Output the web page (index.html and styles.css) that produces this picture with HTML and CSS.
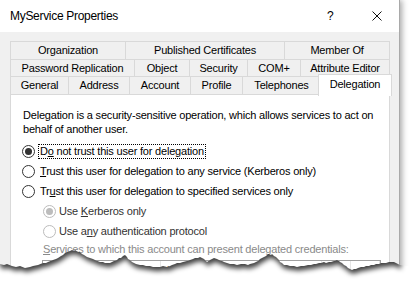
FILE: index.html
```html
<!DOCTYPE html>
<html>
<head>
<meta charset="utf-8">
<title>MyService Properties</title>
<link rel="stylesheet" href="styles.css">
</head>
<body>
<div class="stage">
  <div class="window">
    <div class="titlebar">
      <span class="title">MyService Properties</span>
      <div class="controls">
        <span class="help">?</span>
        <svg class="close" width="10" height="10" viewBox="0 0 10 10"><path d="M0.5 0.5 L9.5 9.5 M9.5 0.5 L0.5 9.5" stroke="#111" stroke-width="1" fill="none"/></svg>
      </div>
    </div>
    <div class="body">
      <div class="tabs">
        <div class="tabrow r1">
          <div class="tab w116">Organization</div>
          <div class="tab w160">Published Certificates</div>
          <div class="tab w106">Member Of</div>
        </div>
        <div class="tabrow r2">
          <div class="tab w125">Password Replication</div>
          <div class="tab w56">Object</div>
          <div class="tab w59">Security</div>
          <div class="tab w54">COM+</div>
          <div class="tab w90">Attribute Editor</div>
        </div>
        <div class="tabrow r3">
          <div class="tab w59">General</div>
          <div class="tab w62">Address</div>
          <div class="tab w62">Account</div>
          <div class="tab w53">Profile</div>
          <div class="tab w79">Telephones</div>
          <div class="tab selected">Delegation</div>
        </div>
      </div>
      <div class="panel">
        <p class="desc">Delegation is a security-sensitive operation, which allows services to act on<br>behalf of another user.</p>
        <div class="opt first"><span class="radio on"></span><span class="lbl focus">D<u>o</u> not trust this user for delegation</span></div>
        <div class="opt"><span class="radio"></span><span class="lbl"><u>T</u>rust this user for delegation to any service (Kerberos only)</span></div>
        <div class="opt"><span class="radio"></span><span class="lbl">Tr<u>u</u>st this user for delegation to specified services only</span></div>
        <div class="opt sub"><span class="radio dis on"></span><span class="lbl">Use <u>K</u>erberos only</span></div>
        <div class="opt sub"><span class="radio dis"></span><span class="lbl">Use a<u>n</u>y authentication protocol</span></div>
        <div class="note"><u>S</u>ervices to which this account can present delegated credentials:</div>
        <div class="list">
          <div class="lhead">
            <span class="c1">Service Type</span>
            <span class="c2">User or Computer</span>
            <span class="c3">Port</span>
            <span class="c4"></span>
          </div>
        </div>
      </div>
    </div>
  </div>
  <svg class="tear" width="409" height="51" viewBox="0 240 409 51">
    <defs>
      <clipPath id="below">
        <path d="M0,264 L4,265 L7,264 L12,266 L16,267 L20,266 L25,268 L30,267 L33,266 L38,265 L43,263 L46,263 L48,262 L53,260 L56,259 L58,258 L61,256 L63,255 L65,253 L67,252 L70,251 L72,250 L74,251 L75,250 L78,252 L80,252 L82,254 L84,255 L87,257 L90,258 L93,259 L95,260 L100,262 L103,262 L105,263 L110,263 L112,262 L114,261 L117,260 L119,258 L121,258 L123,256 L125,255 L127,257 L128,259 L130,260 L132,262 L136,264 L140,265 L143,265 L146,266 L150,266 L153,267 L160,267 L163,266 L167,267 L170,266 L172,265 L175,264 L177,263 L180,263 L183,262 L187,261 L190,260 L193,259 L195,258 L198,258 L200,257 L202,258 L204,259 L207,262 L210,260 L212,259 L214,258 L217,259 L219,260 L222,261 L224,262 L227,263 L230,264 L234,264 L237,265 L241,264 L245,264 L248,265 L250,264 L254,263 L256,262 L258,261 L260,259 L262,258 L264,257 L266,256 L268,254 L269,254 L271,255 L272,254 L274,256 L276,257 L277,258 L279,260 L280,262 L282,263 L284,265 L287,265 L290,266 L294,266 L297,267 L301,266 L304,266 L308,265 L311,265 L314,264 L316,264 L319,263 L321,263 L324,262 L326,263 L329,262 L331,262 L334,261 L337,260 L339,261 L340,262 L342,263 L344,265 L346,266 L348,268 L350,269 L352,270 L354,269 L356,269 L358,268 L361,267 L364,267 L366,266 L369,266 L371,265 L374,265 L376,264 L379,264 L381,263 L384,263 L386,263 L389,262 L391,262 L394,262 L396,263 L398,264 L400,265 L409,266 L409,291 L0,291 Z"/>
      </clipPath>
      <filter id="blur" x="-5%" y="-50%" width="110%" height="200%">
        <feGaussianBlur stdDeviation="2.6"/>
      </filter>
    </defs>
    <g clip-path="url(#below)">
      <rect x="0" y="240" width="409" height="51" fill="#ffffff"/>
      <path transform="translate(1,4)" filter="url(#blur)" fill="#000" fill-opacity="0.75" d="M-10,230 L0,264 L4,265 L7,264 L12,266 L16,267 L20,266 L25,268 L30,267 L33,266 L38,265 L43,263 L46,263 L48,262 L53,260 L56,259 L58,258 L61,256 L63,255 L65,253 L67,252 L70,251 L72,250 L74,251 L75,250 L78,252 L80,252 L82,254 L84,255 L87,257 L90,258 L93,259 L95,260 L100,262 L103,262 L105,263 L110,263 L112,262 L114,261 L117,260 L119,258 L121,258 L123,256 L125,255 L127,257 L128,259 L130,260 L132,262 L136,264 L140,265 L143,265 L146,266 L150,266 L153,267 L160,267 L163,266 L167,267 L170,266 L172,265 L175,264 L177,263 L180,263 L183,262 L187,261 L190,260 L193,259 L195,258 L198,258 L200,257 L202,258 L204,259 L207,262 L210,260 L212,259 L214,258 L217,259 L219,260 L222,261 L224,262 L227,263 L230,264 L234,264 L237,265 L241,264 L245,264 L248,265 L250,264 L254,263 L256,262 L258,261 L260,259 L262,258 L264,257 L266,256 L268,254 L269,254 L271,255 L272,254 L274,256 L276,257 L277,258 L279,260 L280,262 L282,263 L284,265 L287,265 L290,266 L294,266 L297,267 L301,266 L304,266 L308,265 L311,265 L314,264 L316,264 L319,263 L321,263 L324,262 L326,263 L329,262 L331,262 L334,261 L337,260 L339,261 L340,262 L342,263 L344,265 L346,266 L348,268 L350,269 L352,270 L354,269 L356,269 L358,268 L361,267 L364,267 L366,266 L369,266 L371,265 L374,265 L376,264 L379,264 L381,263 L384,263 L386,263 L389,262 L391,262 L394,262 L396,263 L398,264 L400,265 L402,230 Z"/>
    </g>
  </svg>
</div>
</body>
</html>
```
FILE: styles.css
```css
* { box-sizing: border-box; }
html, body { margin: 0; padding: 0; }
body {
  width: 409px;
  height: 291px;
  overflow: hidden;
  background: #fff;
  font-family: "Liberation Sans", Arial, sans-serif;
  font-size: 11px;
  color: #000;
}
.stage { position: relative; width: 409px; height: 291px; overflow: hidden; }
.window {
  width: 399px;
  height: 291px;
  overflow: hidden;
  background: #f0f0f0;
  box-shadow: 1px 0 0 #a9a9a9, 3px 0 6px rgba(0, 0, 0, 0.35);
}
.titlebar {
  height: 32px;
  background: #fff;
  display: flex;
  align-items: center;
  padding: 0 17px 0 10px;
}
.title { font-size: 12px; letter-spacing: -0.3px; color: #000; }
.controls { margin-left: auto; display: flex; align-items: center; gap: 38px; }
.help { font-size: 12px; width: 7px; line-height: 12px; }
.close { display: block; }

.body { padding: 9px 10px 0 10px; }
.tabs { display: flex; flex-direction: column; }
.tabrow { display: flex; align-items: flex-start; }
.tabrow + .tabrow { margin-top: -1px; }
.tab {
  height: 19px;
  border: 1px solid #d9d9d9;
  background: #f0f0f0;
  text-align: center;
  line-height: 17px;
  white-space: nowrap;
  letter-spacing: -0.2px;
  flex: none;
}
.tab + .tab { margin-left: -1px; }
.r2 .tab { height: 18px; line-height: 16px; }
.w116 { width: 116px; }
.w160 { width: 160px; }
.w106 { width: 106px; }
.w125 { width: 125px; }
.w56 { width: 56px; }
.w59 { width: 59px; }
.w54 { width: 54px; }
.w90 { width: 90px; }
.w62 { width: 62px; }
.w53 { width: 53px; }
.w79 { width: 79px; }
.tab.selected {
  position: relative;
  z-index: 2;
  width: 74px;
  height: 22px;
  margin: -2px 0 -1px -3px;
  background: #fff;
  border-bottom: none;
  line-height: 17px;
  padding-top: 1px;
}

.panel {
  margin-top: -1px;
  width: 380px;
  height: 197px;
  background: #fff;
  border: 1px solid #d9d9d9;
  border-bottom: none;
  padding: 13px 0 0 12px;
  letter-spacing: -0.2px;
}
.desc { margin: 0; line-height: 14px; }
.opt { display: flex; align-items: center; height: 20px; }
.opt.first { margin-top: 5px; }
.radio {
  width: 13px;
  height: 13px;
  border: 1px solid #333;
  border-radius: 50%;
  background: #fff;
  flex: none;
  display: flex;
  align-items: center;
  justify-content: center;
  margin-left: -1px;
}
.radio.on::after {
  content: "";
  width: 7px;
  height: 7px;
  border-radius: 50%;
  background: #333;
}
.radio.dis { border-color: #bcbcbc; }
.radio.dis.on::after { background: #bcbcbc; }
.lbl {
  margin-left: 3px;
  padding: 0 1px;
  border: 1px dotted transparent;
  line-height: 13px;
  white-space: nowrap;
}
.lbl.focus { border-color: #000; }
.opt.sub { padding-left: 21px; }
.opt.sub .lbl { margin-left: 1px; color: #333; }
.note {
  margin-left: 20px;
  height: 16px;
  line-height: 16px;
  color: #8a8a8a;
  white-space: nowrap;
}
.list {
  margin: 3px 0 0 19px;
  width: 339px;
  height: 28px;
  border: 1px solid #a0a0a0;
  border-bottom: none;
  background: #fff;
}
.lhead { display: flex; height: 20px; }
.lhead span {
  flex: none;
  border-right: 1px solid #e5e5e5;
  padding-left: 6px;
  line-height: 19px;
  white-space: nowrap;
}
.c1 { width: 118px; }
.c2 { width: 161px; }
.c3 { width: 29px; }
.c4 { width: 29px; border-right: none; }

.tear { position: absolute; left: 0; top: 240px; display: block; }
```
